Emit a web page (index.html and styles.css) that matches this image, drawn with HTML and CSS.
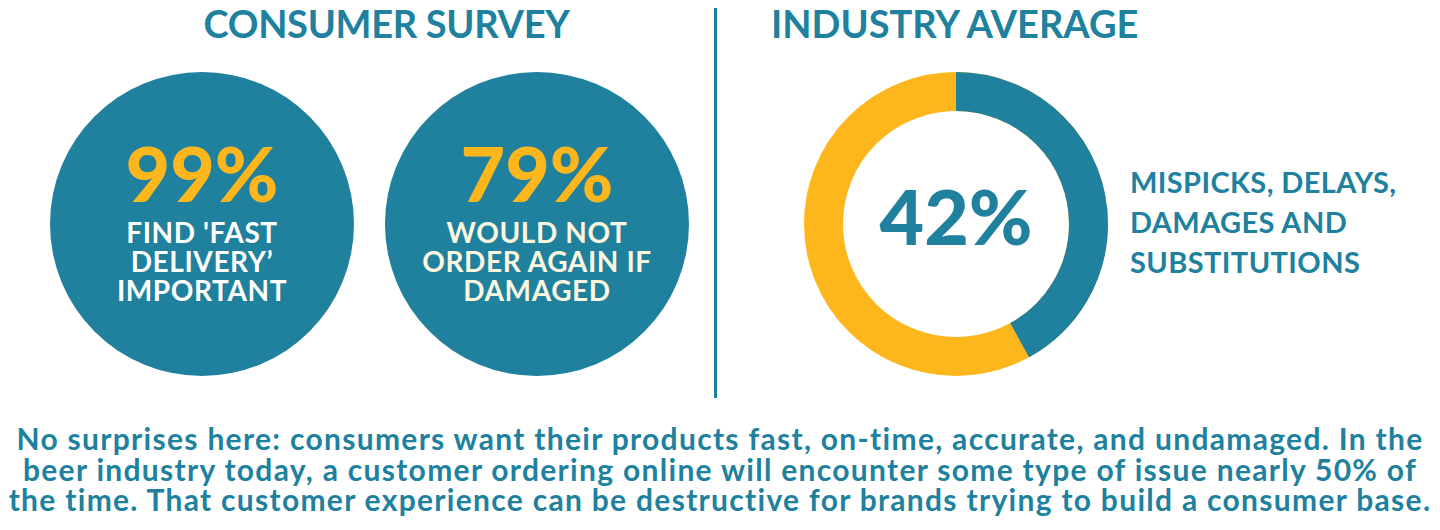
FILE: index.html
```html
<!DOCTYPE html>
<html lang="en">
<head>
<meta charset="utf-8">
<title>Consumer Survey vs Industry Average</title>
<link rel="stylesheet" href="styles.css">
</head>
<body>
<main class="page">
  <section class="top">
    <div class="survey">
      <h2 class="heading heading-survey">CONSUMER SURVEY</h2>
      <div class="circles">
        <div class="circle">
          <div class="stat">99%</div>
          <div class="caption">FIND 'FAST<br>DELIVERY’<br>IMPORTANT</div>
        </div>
        <div class="circle">
          <div class="stat">79%</div>
          <div class="caption caption-cream">WOULD NOT<br>ORDER AGAIN IF<br>DAMAGED</div>
        </div>
      </div>
    </div>
    <div class="divider"></div>
    <div class="industry">
      <h2 class="heading">INDUSTRY AVERAGE</h2>
      <div class="chart-row">
        <div class="donut">
          <svg class="donut-svg" viewBox="0 0 304 304" width="304" height="304" aria-hidden="true">
            <circle cx="152" cy="152" r="132.5" fill="none" stroke="#fdb71d" stroke-width="39"/>
            <circle cx="152" cy="152" r="132.5" fill="none" stroke="#20819e" stroke-width="39"
              stroke-dasharray="349.7 832.5" transform="rotate(-90 152 152)"/>
          </svg>
          <div class="donut-label">42%</div>
        </div>
        <div class="chart-text">MISPICKS, DELAYS,<br>DAMAGES AND<br>SUBSTITUTIONS</div>
      </div>
    </div>
  </section>
  <p class="summary">No surprises here: consumers want their products fast, on-time, accurate, and undamaged. In the<br>beer industry today, a customer ordering online will encounter some type of issue nearly 50% of<br>the time. That customer experience can be destructive for brands trying to build a consumer base.</p>
</main>
</body>
</html>
```

FILE: styles.css
```css
* { box-sizing: border-box; }

html, body {
  margin: 0;
  padding: 0;
  background: #ffffff;
}

body {
  font-family: "Lato", "Liberation Sans", sans-serif;
  font-weight: 700;
  color: #20819e;
  width: 1440px;
  height: 530px;
  overflow: hidden;
}

.top {
  display: flex;
  align-items: flex-start;
}

.survey {
  width: 714px;
  padding-left: 50px;
}

.heading {
  margin: 0;
  font-size: 38px;
  line-height: 46px;
  font-weight: 700;
  color: #20819e;
  white-space: nowrap;
}

.heading-survey {
  text-align: center;
  padding-left: 34px;
  width: 639px;
  letter-spacing: -0.3px;
}

.circles {
  display: flex;
  gap: 31px;
  margin-top: 26px;
}

.circle {
  width: 304px;
  height: 304px;
  border-radius: 50%;
  background: #20819e;
  display: flex;
  flex-direction: column;
  align-items: center;
  justify-content: center;
  text-align: center;
  padding-bottom: 8px;
}

.stat {
  font-size: 77px;
  line-height: 74px;
  font-weight: 900;
  color: #fdb71d;
}

.caption {
  margin-top: 9px;
  font-size: 28px;
  line-height: 29px;
  font-weight: 700;
  letter-spacing: 0.6px;
  color: #ffffff;
}

.caption-cream {
  color: #fcf7df;
}

.divider {
  width: 3px;
  height: 390px;
  margin-top: 8px;
  background: #20819e;
  flex: none;
}

.industry {
  padding-left: 54px;
  flex: 1;
}

.chart-row {
  display: flex;
  align-items: center;
  margin-top: 26px;
  padding-left: 33px;
  gap: 22px;
}

.donut {
  position: relative;
  width: 304px;
  height: 304px;
  flex: none;
}

.donut-svg {
  display: block;
}

.donut-label {
  position: absolute;
  inset: 0;
  display: flex;
  align-items: center;
  justify-content: center;
  padding-bottom: 18px;
  font-size: 77px;
  line-height: 74px;
  font-weight: 900;
  color: #20819e;
}

.chart-text {
  font-size: 29px;
  line-height: 40px;
  font-weight: 700;
  letter-spacing: 0.4px;
  color: #20819e;
  white-space: nowrap;
  padding-bottom: 4px;
}

.summary {
  margin: 25px 0 0;
  text-align: center;
  font-size: 30px;
  line-height: 30.5px;
  font-weight: 700;
  letter-spacing: 1.3px;
  color: #20819e;
  white-space: nowrap;
}
```
